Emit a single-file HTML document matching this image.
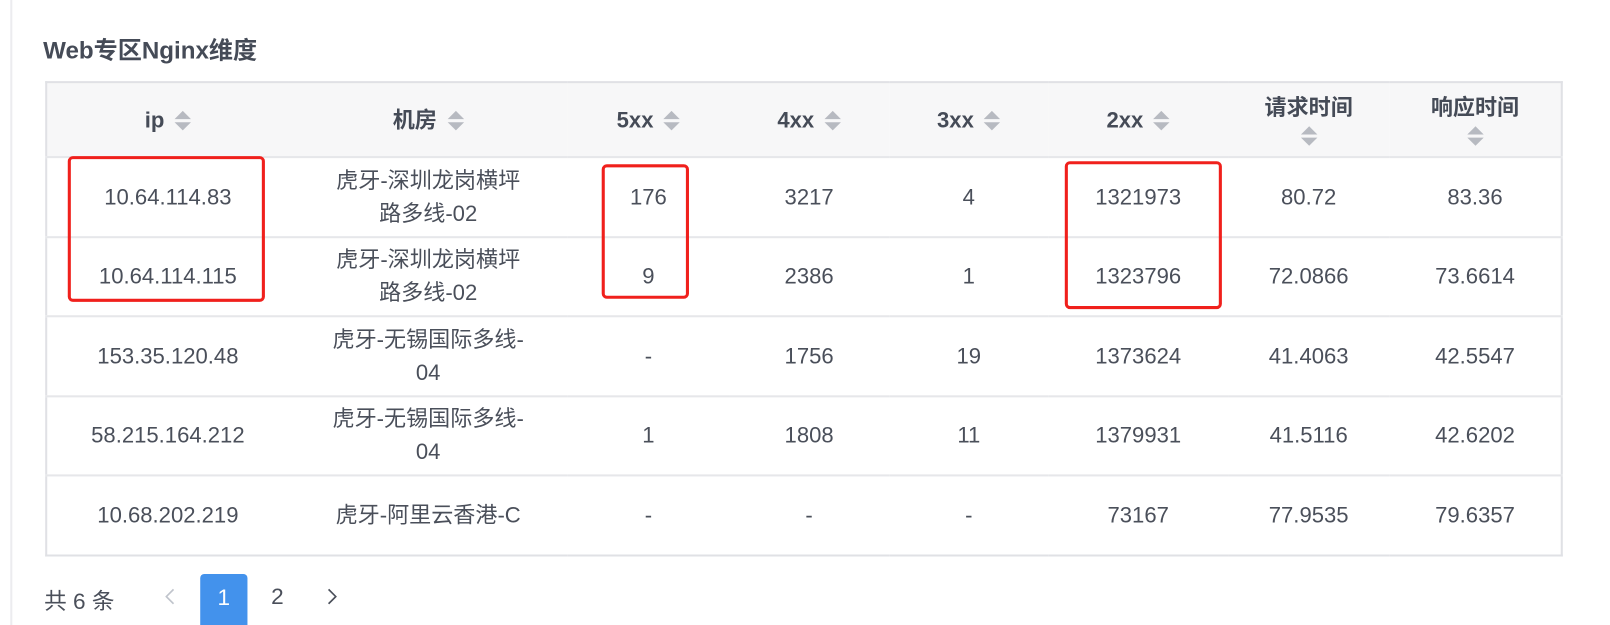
<!DOCTYPE html>
<html><head><meta charset="utf-8"><style>
*{margin:0;padding:0;box-sizing:border-box}
body{width:1610px;height:609px;background:#fff;font-family:"Liberation Sans","Noto Sans CJK SC",sans-serif;color:#4a4f5a;position:relative;overflow:hidden}
#w{position:absolute;left:0;top:0;width:1568px;height:593px;transform:scale(1.0268);transform-origin:0 0}
.vl{position:absolute;left:10px;top:0;width:2px;height:609px;background:#ececef}
.title{position:absolute;left:42px;top:30px;font-size:23.5px;font-weight:bold;color:#454b57}
table{position:absolute;left:44px;top:79px;width:1478px;border-collapse:collapse;border:2px solid #e0e1e5;font-size:21.5px;table-layout:fixed}
th{background:#f7f7f8;height:73px;font-weight:bold;color:#454b57;border-bottom:2px solid #e6e7ea;line-height:28px}
td{text-align:center;border-bottom:2px solid #e6e7ea;height:77.5px;line-height:32px;color:#4a4f5a}
tr:last-child td{border-bottom:none}
.s{display:inline-block;width:16px;height:20px;vertical-align:middle;margin-left:10px;position:relative}
.s:before{content:"";position:absolute;left:0;top:0;border:8px solid transparent;border-top:0;border-bottom:8px solid #b7bac1}
.s:after{content:"";position:absolute;left:0;top:11px;border:8px solid transparent;border-bottom:0;border-top:8px solid #b7bac1}
.sb{display:block;margin:4px auto 0}
.box{position:absolute;border:3px solid #f0201c;border-radius:5px}
.pg{position:absolute;top:568px;font-size:22px;color:#4a4f5a}
</style></head><body>
<div id="w">
<div class="vl"></div>
<div class="title">Web专区Nginx维度</div>
<table>
<colgroup><col style="width:236px"><col style="width:272px"><col style="width:157px"><col style="width:156px"><col style="width:155px"><col style="width:175px"><col style="width:157px"><col></colgroup>
<tr><th>ip<span class="s"></span></th><th>机房<span class="s"></span></th><th>5xx<span class="s"></span></th><th>4xx<span class="s"></span></th><th>3xx<span class="s"></span></th><th>2xx<span class="s"></span></th><th>请求时间<span class="s sb"></span></th><th>响应时间<span class="s sb"></span></th></tr>
<tr><td>10.64.114.83</td><td>虎牙-深圳龙岗横坪<br>路多线-02</td><td>176</td><td>3217</td><td>4</td><td>1321973</td><td>80.72</td><td>83.36</td></tr>
<tr><td>10.64.114.115</td><td>虎牙-深圳龙岗横坪<br>路多线-02</td><td>9</td><td>2386</td><td>1</td><td>1323796</td><td>72.0866</td><td>73.6614</td></tr>
<tr><td>153.35.120.48</td><td>虎牙-无锡国际多线-<br>04</td><td>-</td><td>1756</td><td>19</td><td>1373624</td><td>41.4063</td><td>42.5547</td></tr>
<tr><td>58.215.164.212</td><td>虎牙-无锡国际多线-<br>04</td><td>1</td><td>1808</td><td>11</td><td>1379931</td><td>41.5116</td><td>42.6202</td></tr>
<tr><td>10.68.202.219</td><td>虎牙-阿里云香港-C</td><td>-</td><td>-</td><td>-</td><td>73167</td><td>77.9535</td><td>79.6357</td></tr>
</table>
<div class="box" style="left:66px;top:152px;width:192px;height:142px"></div>
<div class="box" style="left:586px;top:160px;width:85px;height:131px"></div>
<div class="box" style="left:1037px;top:157px;width:153px;height:144px"></div>
<div class="pg" style="left:43px">共 6 条</div>
<svg style="position:absolute;left:159px;top:572px" width="12" height="18" viewBox="0 0 12 18"><path d="M10 2 L3 9 L10 16" fill="none" stroke="#c0c4cc" stroke-width="1.6"/></svg>
<div style="position:absolute;left:195px;top:559px;width:46px;height:50px;background:#4392ec;border-radius:4px 4px 0 0;color:#fff;font-size:22px;text-align:center;line-height:46px">1</div>
<div class="pg" style="left:264px">2</div>
<svg style="position:absolute;left:318px;top:572px" width="12" height="18" viewBox="0 0 12 18"><path d="M2 2 L9 9 L2 16" fill="none" stroke="#4a4f5a" stroke-width="1.6"/></svg>
</div>
</body></html>
